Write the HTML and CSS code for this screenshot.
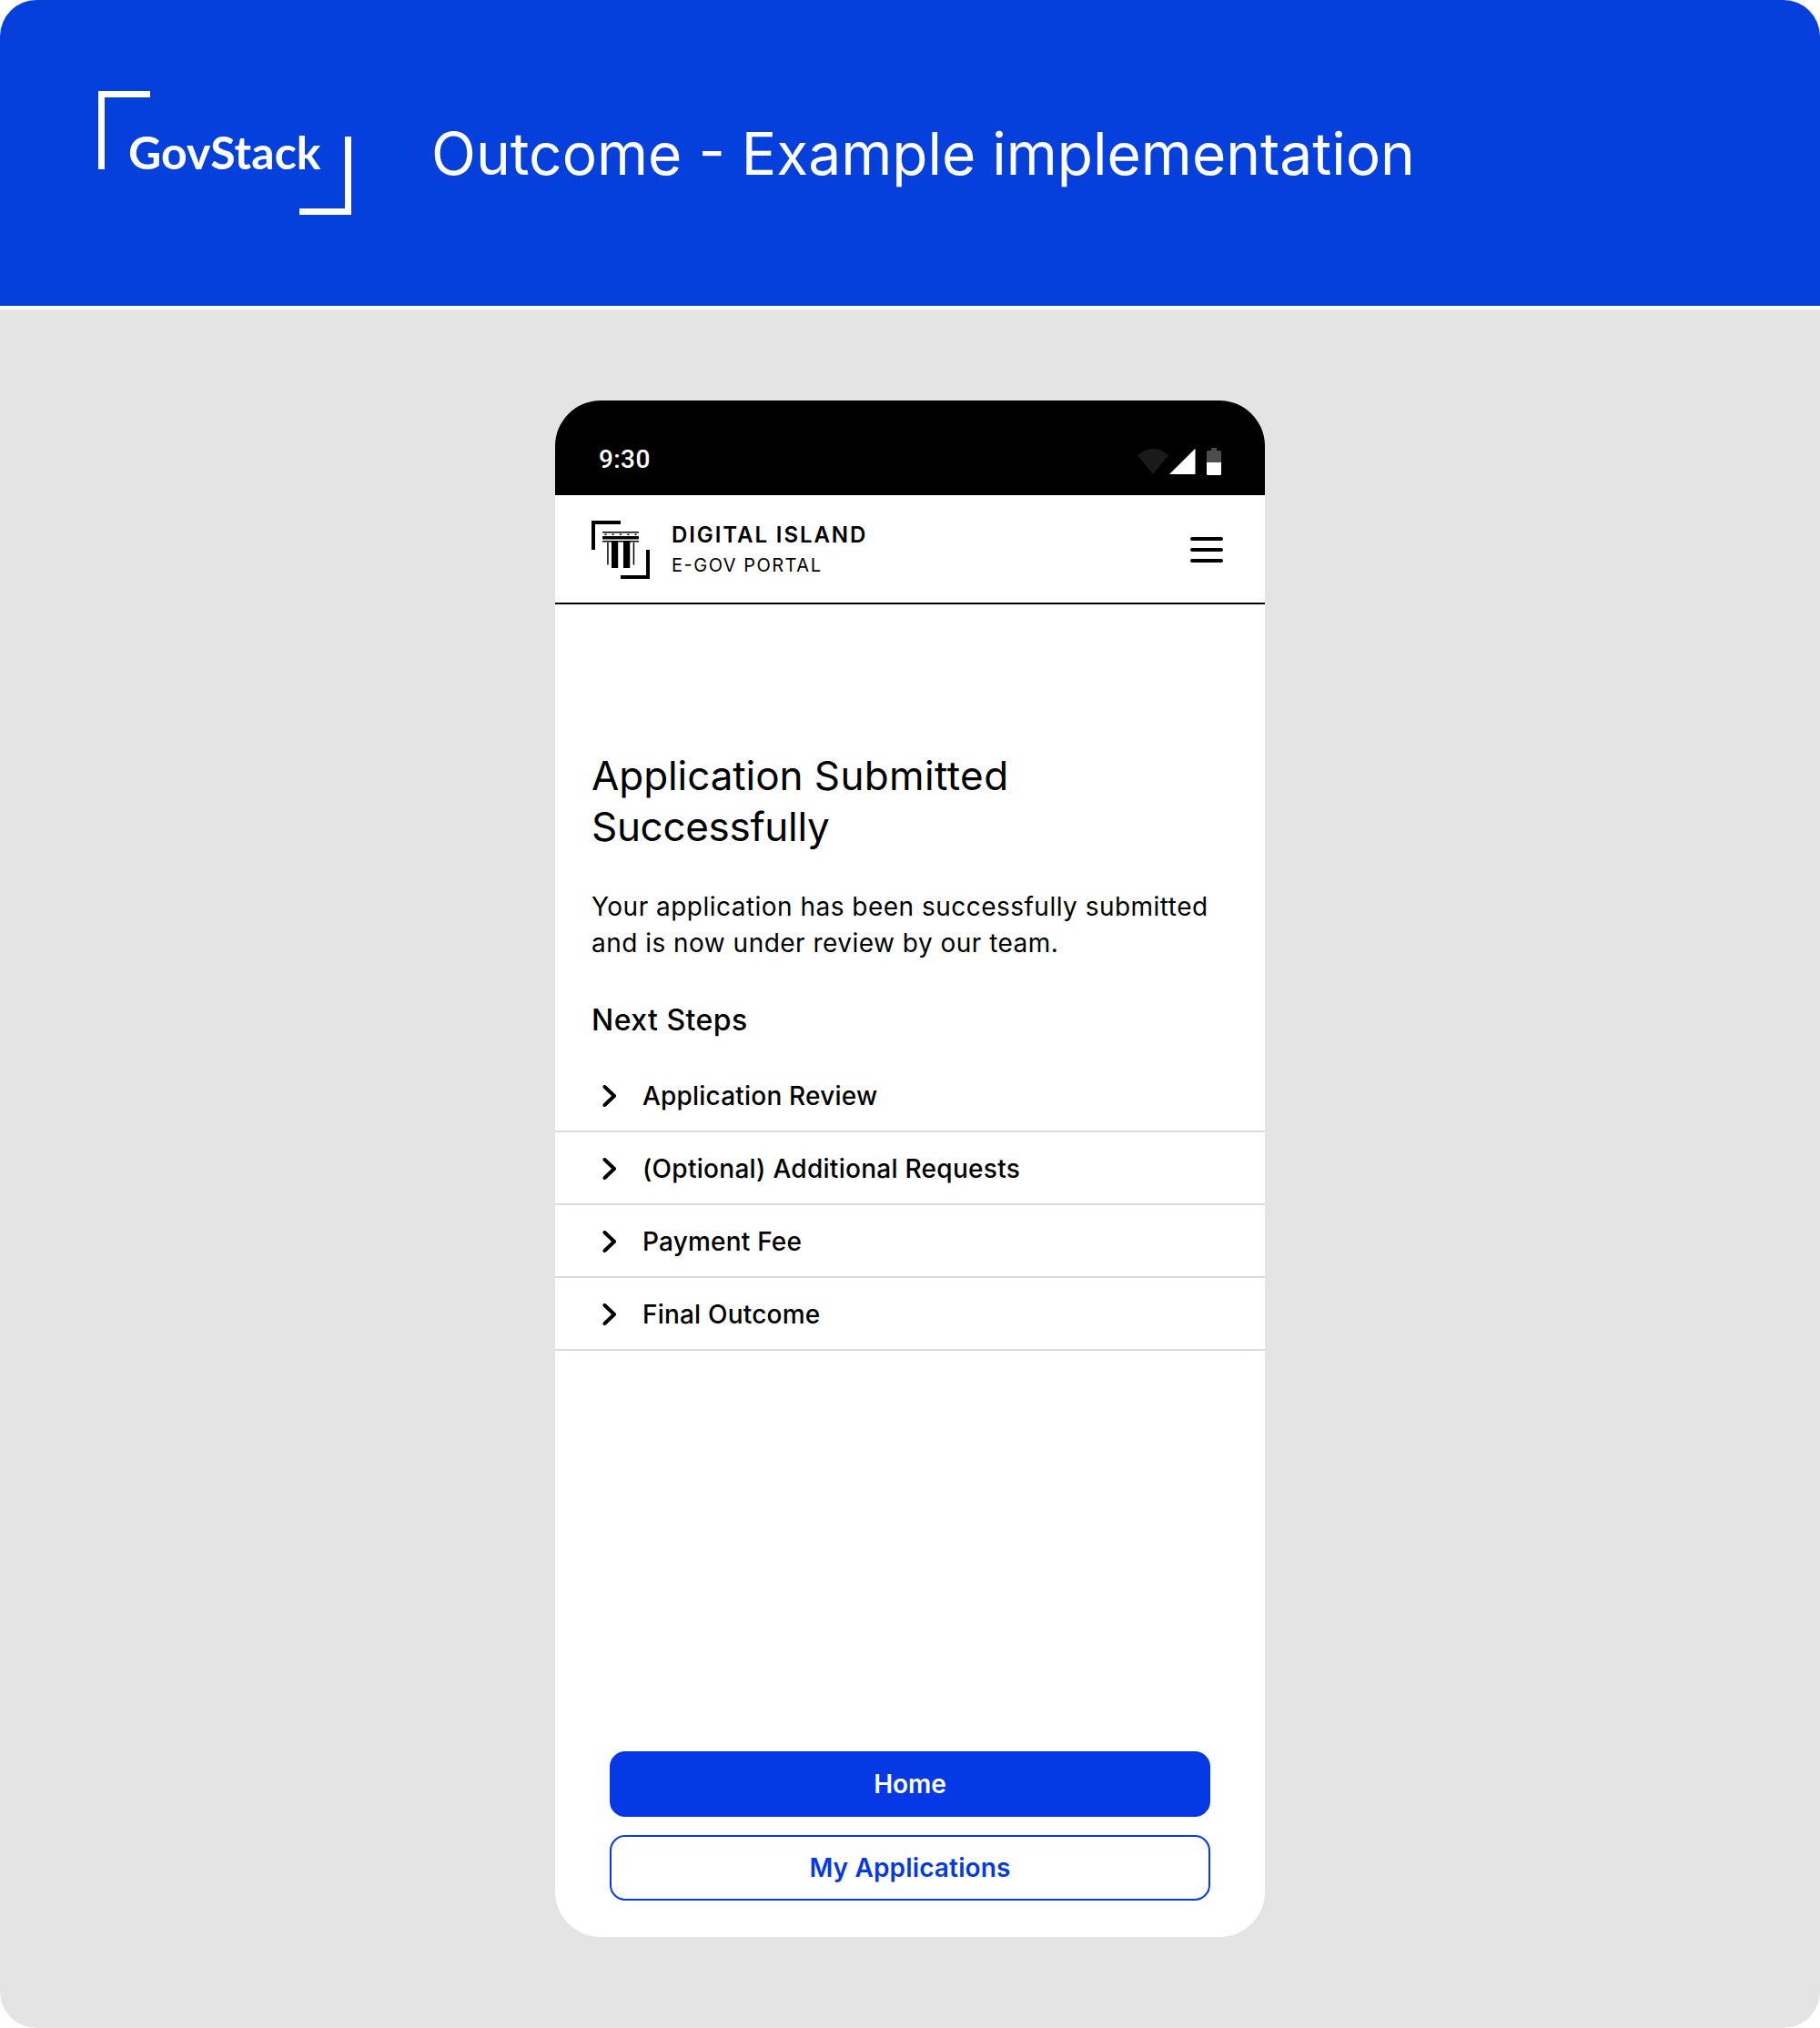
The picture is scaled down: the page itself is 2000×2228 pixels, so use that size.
FILE: index.html
```html
<!DOCTYPE html>
<html lang="en">
<head>
<meta charset="utf-8">
<title>Outcome - Example implementation</title>
<link rel="stylesheet" href="styles.css">
</head>
<body>
<div class="board">
  <header class="banner">
    <svg class="banner-logo" width="278" height="136" viewBox="0 0 278 136" role="img" aria-label="GovStack">
      <path d="M57 0H0v86h7V7h50zM221 136h57V50h-7v79h-50z" fill="#fff"/>
      <text class="wordmark" x="33" y="85.500" textLength="211.500">GovStack</text>
    </svg>
    <h1 class="banner-title">Outcome <span class="dash">-</span> Example implementation</h1>
  </header>
  <main class="stage">
    <section class="phone">
      <div class="status-bar">
        <span class="clock">9:30</span>
        <svg class="status-icons" width="94" height="32" viewBox="0 0 94 32" aria-hidden="true">
          <path d="M1 8.500Q8 1 18 1T35 8.500L18 29z" fill="#1a1a1a"/>
          <path d="M36 29 64.500.8V29z" fill="#fff"/>
          <path d="M77 16V5q0-2 2-2h3V0h6v3h3q2 0 2 2v11z" fill="#4d4d4d"/>
          <path d="M77 16h16v12.500q0 1.500-1.500 1.500h-13q-1.500 0-1.500-1.500z" fill="#fff"/>
        </svg>
      </div>
      <nav class="app-bar">
        <div class="brand">
          <svg width="64" height="64" viewBox="0 0 64 64" aria-hidden="true">
            <path d="M32 0H0v32h4V4h28zM32 64h32V32h-4v28H32z"/>
            <path d="M12 12h40v1.400H12zM12.500 17h39l.5.800v2.200l-1 .500H13l-1-.500v-2.200zM12 22h40v1.600H12zM17.200 24h1.500v24.500h-1.500zM22 23h7.200v29H22zM35 23h7.300v29H35zM45.700 24h1.500v24.500h-1.500z"/>
            <path d="M14.500 14.500h2v1.500h-2zM22.600 14.500h2v1.500h-2zM31 14.500h2v1.500h-2zM39.400 14.500h2v1.500h-2zM47.500 14.500h2v1.500h-2z"/>
          </svg>
          <div class="brand-text">
            <span class="brand-name">DIGITAL ISLAND</span>
            <span class="brand-sub">E-GOV PORTAL</span>
          </div>
        </div>
        <svg width="36" height="28" viewBox="0 0 36 28" aria-label="Menu">
          <path d="M2 2h32M2 14h32M2 26h32" stroke="#000" stroke-width="4" stroke-linecap="round"/>
        </svg>
      </nav>
      <div class="content">
        <h2 class="heading"><span class="snug">Application</span> <span class="open">Submitted</span><br><span class="tight">Successfully</span></h2>
        <p class="message">Your application has been successfully submitted<br>and is now under review by our team.</p>
        <h3 class="subheading">Next Steps</h3>
      </div>
      <ul class="steps">
        <li class="step"><svg class="chevron" viewBox="0 0 16 24"><path d="M2.500 2 13 12 2.500 22"/></svg>Application Review</li>
        <li class="step step-long"><svg class="chevron" viewBox="0 0 16 24"><path d="M2.500 2 13 12 2.500 22"/></svg>(Optional) Additional Requests</li>
        <li class="step"><svg class="chevron" viewBox="0 0 16 24"><path d="M2.500 2 13 12 2.500 22"/></svg>Payment Fee</li>
        <li class="step"><svg class="chevron" viewBox="0 0 16 24"><path d="M2.500 2 13 12 2.500 22"/></svg>Final Outcome</li>
      </ul>
      <div class="actions">
        <button class="btn btn-primary">Home</button>
        <button class="btn btn-outline">My Applications</button>
      </div>
    </section>
  </main>
</div>
</body>
</html>
```
FILE: styles.css
```css
* { box-sizing: border-box; margin: 0; padding: 0; }

body {
  background: #fff;
  color: #000;
  font-family: Inter, "Liberation Sans", sans-serif;
}

.board {
  width: 2000px;
  height: 2228px;
  display: flex;
  flex-direction: column;
  gap: 4px;
  border-radius: 40px;
  overflow: hidden;
}

.banner {
  height: 336px;
  display: flex;
  align-items: center;
  gap: 88px;
  padding-left: 108px;
  background: #0540dc;
  color: #fff;
}

.wordmark {
  font-family: Lato, sans-serif;
  font-size: 50px;
  font-weight: 700;
  fill: #fff;
}

.banner-title {
  font-size: 64px;
  font-weight: 400;
  white-space: nowrap;
}

.dash { font-feature-settings: "case"; }

.stage {
  flex: 1;
  display: flex;
  justify-content: center;
  padding: 100px 0;
  background: #e4e4e4;
}

.phone {
  width: 780px;
  display: flex;
  flex-direction: column;
  border-radius: 50px;
  background: #fff;
  overflow: hidden;
}

.status-bar {
  height: 104px;
  display: flex;
  justify-content: space-between;
  align-items: flex-start;
  padding: 49px 47px 0 48px;
  background: #000;
  color: #fff;
}

.clock {
  font: 500 28px/32px Roboto, sans-serif;
  letter-spacing: 0.4px;
}

.status-icons { margin-top: 3px; }

.app-bar {
  height: 120px;
  display: flex;
  justify-content: space-between;
  align-items: center;
  padding: 2px 46px 0 40px;
  border-bottom: 2px solid #000;
}

.brand { height: 64px; display: flex; gap: 24px; }

.brand-text { display: flex; flex-direction: column; }

.brand-name {
  font-size: 24px;
  line-height: 31px;
  font-weight: 600;
  letter-spacing: 1.93px;
}

.brand-sub {
  font-size: 20px;
  line-height: 36px;
  letter-spacing: 1.5px;
  font-feature-settings: "case";
}

.content {
  display: flex;
  flex-direction: column;
  gap: 40px;
  padding: 160px 40px 19px;
}

.heading { font-size: 44px; line-height: 56px; font-weight: 400; }

.snug { letter-spacing: -0.08px; }

.open { letter-spacing: 0.38px; }

.tight { letter-spacing: -0.32px; }

.message { font-size: 28px; line-height: 40px; letter-spacing: 0.48px; white-space: nowrap; }

.subheading {
  padding-top: 1px;
  font-size: 32px;
  line-height: 48px;
  font-weight: 500;
  letter-spacing: 0.46px;
}

.steps { list-style: none; }

.step {
  height: 80px;
  display: flex;
  align-items: center;
  gap: 28px;
  padding-left: 52px;
  box-shadow: inset 0 -2px #d8dce2;
  font-size: 28px;
  font-weight: 500;
  letter-spacing: 0.2px;
}

.step-long { letter-spacing: 0.28px; }

.chevron {
  width: 16px;
  height: 24px;
  fill: none;
  stroke: #000;
  stroke-width: 4;
  stroke-linecap: round;
  stroke-linejoin: round;
}

.actions {
  display: flex;
  flex-direction: column;
  gap: 20px;
  margin-top: auto;
  padding: 0 60px 40px;
}

.btn {
  height: 72px;
  border: 2px solid #0539e5;
  border-radius: 17px;
  font: 600 28px/40px Inter, sans-serif;
}

.btn-primary { background: #0539e5; color: #fff; }

.btn-outline { background: #fff; color: #0539e5; letter-spacing: 0.15px; }
```
